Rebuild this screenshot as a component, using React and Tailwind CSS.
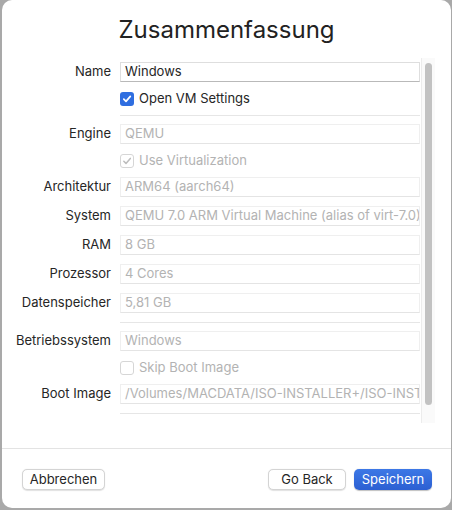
import React from "react";

const font = { fontFamily: "Inter, 'Noto Sans', 'Liberation Sans', sans-serif" };

function Check({ state }) {
  // state: "on" | "disabledOn" | "off"
  if (state === "on") {
    return (
      <span className="flex h-[14px] w-[14px] items-center justify-center rounded-[3px] bg-[#2f6ee0]">
        <svg width="10" height="10" viewBox="0 0 10 10">
          <path d="M1.8 5.2 L4 7.4 L8.3 2.4" fill="none" stroke="#fff" strokeWidth="1.7" strokeLinecap="round" strokeLinejoin="round" />
        </svg>
      </span>
    );
  }
  return (
    <span className="flex h-[14px] w-[14px] items-center justify-center rounded-[3px] border border-[#d6d6d6] bg-white">
      {state === "disabledOn" && (
        <svg width="10" height="10" viewBox="0 0 10 10">
          <path d="M1.8 5.2 L4 7.4 L8.3 2.4" fill="none" stroke="#bdbdbd" strokeWidth="1.5" strokeLinecap="round" strokeLinejoin="round" />
        </svg>
      )}
    </span>
  );
}

function Field({ label, value, active, className = "" }) {
  return (
    <div className={"flex h-[20px] items-center " + className}>
      <div className="w-[109px] text-right text-[13px] text-[#262626]">{label}</div>
      <div
        className={
          "ml-[9px] flex h-[20px] w-[300px] items-center overflow-hidden whitespace-nowrap pl-[4px] text-[13px] " +
          (active
            ? "border border-[#dedede] border-b-[#b9b9b9] text-[#262626]"
            : "border border-[#efefef] border-b-[#e4e4e4] text-[#b3b3b3]")
        }
      >
        {value}
      </div>
    </div>
  );
}

function CheckRow({ label, state, className = "" }) {
  return (
    <div className={"flex h-[14px] items-center " + className}>
      <div className="ml-[118px] flex items-center gap-[5px]">
        <Check state={state} />
        {label && (
          <span className={"text-[13px] " + (state === "on" ? "text-[#262626]" : "text-[#b3b3b3]")}>{label}</span>
        )}
      </div>
    </div>
  );
}

function Divider({ className = "" }) {
  return <div className={"ml-[118px] h-px w-[300px] bg-[#e6e6e6] " + className} />;
}

function Button({ children, primary, className = "" }) {
  return (
    <button
      className={
        "flex h-[21px] items-center justify-center rounded-[5px] text-[13px] " +
        (primary
          ? "bg-gradient-to-b from-[#3d78e6] to-[#2c5fd2] text-white shadow-[0_0.5px_1px_rgba(0,0,0,0.25)]"
          : "border border-[#d4d4d4] bg-white text-[#262626] shadow-[0_0.5px_1px_rgba(0,0,0,0.12)]") +
        " " +
        className
      }
    >
      {children}
    </button>
  );
}

export default function App() {
  return (
    <div className="h-[510px] w-[452px] bg-[#a9a9a9] pl-[2px]" style={font}>
      <div className="flex h-[508px] w-[449px] flex-col overflow-hidden rounded-[10px] bg-white">
        <div className="h-[58px] pt-[14px] text-center text-[24px] leading-[32px] text-[#222]">Zusammenfassung</div>

        <div className="flex h-[365px]">
          <div className="flex-1 overflow-hidden">
            <div className="flex flex-col pt-[4px]">
              <Field label="Name" value="Windows" active />
              <CheckRow label="Open VM Settings" state="on" className="mt-[10px]" />
              <Divider className="mt-[9px]" />
              <Field label="Engine" value="QEMU" className="mt-[8px]" />
              <CheckRow label="Use Virtualization" state="disabledOn" className="mt-[10px]" />
              <Field label="Architektur" value="ARM64 (aarch64)" className="mt-[9px]" />
              <Field label="System" value="QEMU 7.0 ARM Virtual Machine (alias of virt-7.0)" className="mt-[9px]" />
              <Field label="RAM" value="8 GB" className="mt-[9px]" />
              <Field label="Prozessor" value="4 Cores" className="mt-[9px]" />
              <Field label="Datenspeicher" value="5,81 GB" className="mt-[9px]" />
              <Divider className="mt-[9px]" />
              <Field label="Betriebssystem" value="Windows" className="mt-[8px]" />
              <CheckRow label="Skip Boot Image" state="off" className="mt-[10px]" />
              <Field label="Boot Image" value="/Volumes/MACDATA/ISO-INSTALLER+/ISO-INSTALLER/Win11_ARM64.iso" className="mt-[9px]" />
              <Divider className="mt-[9px]" />
              <CheckRow state="off" className="mt-[9px]" />
            </div>
          </div>
          <div className="flex w-[14px] justify-center border-l border-[#ececec] bg-[#fafafa] pt-[5px]">
            <div className="h-[342px] w-[7px] rounded-full bg-[#c2c2c2]" />
          </div>
          <div className="w-[16px]" />
        </div>

        <div className="mt-[25px] h-px w-full bg-[#e3e3e3]" />

        <div className="flex items-center pl-[20px] pr-[19px] pt-[20px]">
          <Button className="w-[83px]">Abbrechen</Button>
          <div className="flex-1" />
          <Button className="w-[78px]">Go Back</Button>
          <Button primary className="ml-[8px] w-[78px]">Speichern</Button>
        </div>
      </div>
    </div>
  );
}
